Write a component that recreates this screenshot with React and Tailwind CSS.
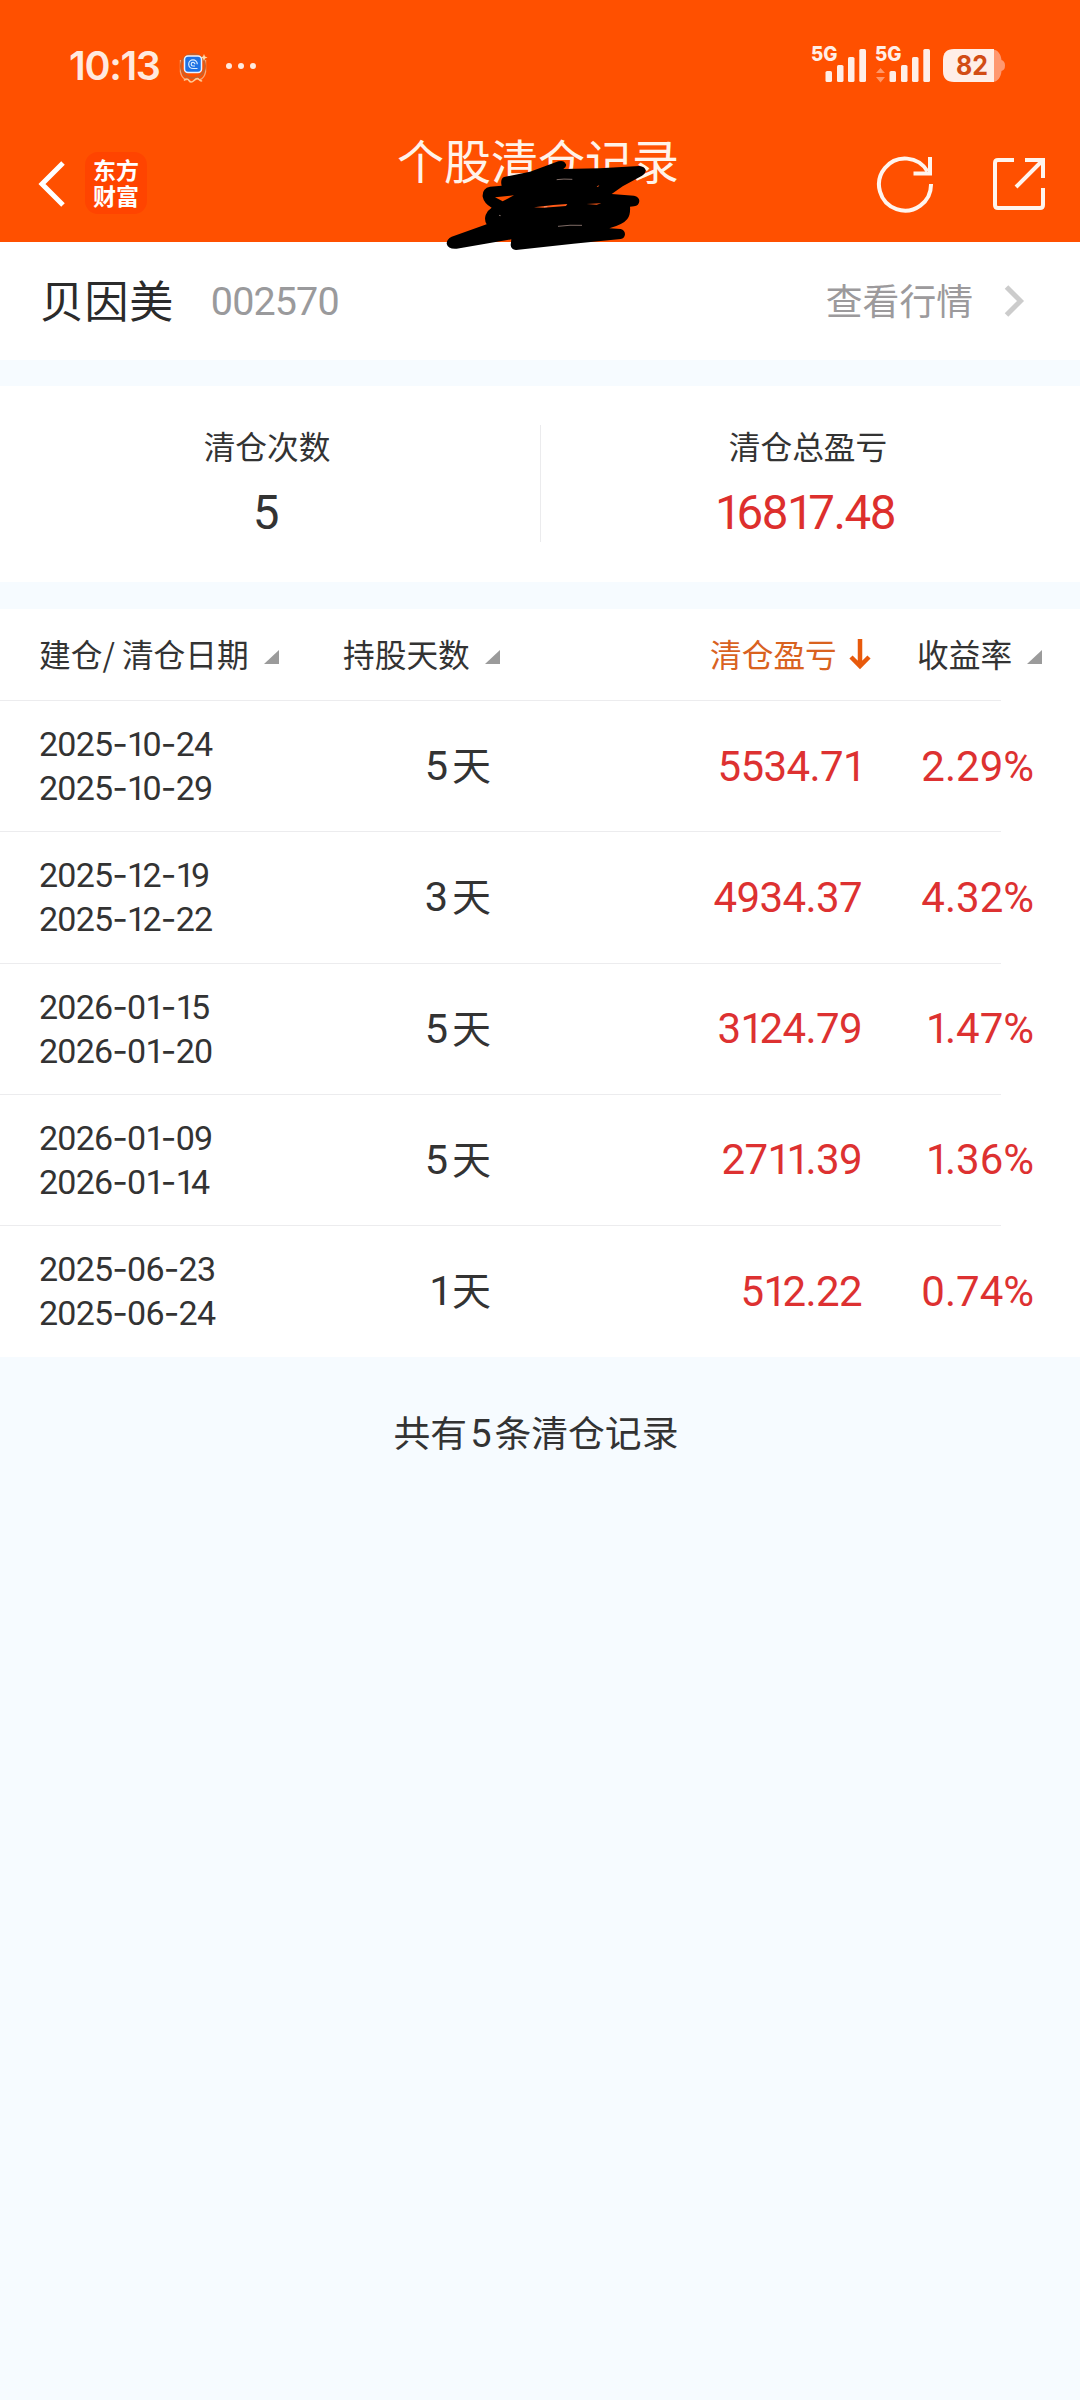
/* Numerals: a narrow 1 and wide hyphens, the rest from Roboto */
function Num({ children, className = "" }) {
  return (
    <span className={`font-[Roboto,sans-serif] whitespace-nowrap ${className}`}>
      {String(children).split("").map((c, i) =>
        c === "1" ? (
          <span key={i} className="tracking-[-0.11em]">1</span>
        ) : c === "-" ? (
          <span key={i} className="font-[Inter,sans-serif]">-</span>
        ) : (
          c
        )
      )}
    </span>
  );
}

function Signal({ data }) {
  return (
    <svg width="58" height="50" viewBox="808 35 58 50" fill="#ffeee7" className="overflow-visible">
      {data && <path d="M812 73l4.500-5 4.500 5zM812 77l4.500 5.500 4.500-5.500z" opacity="0.45" />}
      <rect x="825.500" y="71" width="6.500" height="11" rx="1.600" />
      <rect x="837" y="65" width="6.500" height="17" rx="1.600" />
      <rect x="848" y="57" width="6.500" height="25" rx="1.600" />
      <rect x="859.300" y="49" width="6.700" height="33" rx="1.600" />
      <text x="811" y="61" fontSize="20.500" fontWeight="800" fontFamily="Inter" textLength="26.500" lengthAdjust="spacingAndGlyphs">5G</text>
    </svg>
  );
}

function StatusBar() {
  return (
    <div className="flex h-[122px] items-start pt-[35px] pl-[69px] pr-[74px]">
      <div className="mt-[10px] h-[40px] w-[108px] font-[Inter,sans-serif] text-[39.500px] leading-[42px] font-semibold tracking-[-1.300px] whitespace-nowrap text-[#ffe9df]">10:13</div>
      <svg className="mt-[17px]" width="32" height="32" viewBox="0 0 32 32">
        <path d="M3.500 8v12q1 6 6 8M28.500 8v12q-1 6-6 8" fill="none" stroke="#f7a878" strokeWidth="1.400" />
        <circle cx="16" cy="14" r="12" fill="none" stroke="#c9602a" strokeWidth="2" />
        <path d="M7 28.500q3-3 5 0t5 0 5-1 3 1" fill="none" stroke="#ffc994" strokeWidth="1.600" />
        <path d="M27 2l1 2.500 2.500 1-2.500 1-1 2.500-1-2.500-2.500-1 2.500-1z" fill="#ffd9a8" />
        <rect x="7.500" y="4" width="17" height="16.500" rx="3.500" fill="#1f72e4" stroke="#e9f2ff" strokeWidth="1.500" />
        <path d="M20.500 16.500h-4.500a4.300 4.300 0 1 1 4.300-4.300M18 14h-2a1.800 1.800 0 1 1 1.800-1.800" fill="none" stroke="#d8ecff" strokeWidth="1.200" />
      </svg>
      <div className="mt-[28px] ml-[17px] flex gap-[6px]">
        <i className="size-[6px] rounded-full bg-[#ffe9df]" />
        <i className="size-[6px] rounded-full bg-[#ffe9df]" />
        <i className="size-[6px] rounded-full bg-[#ffe9df]" />
      </div>
      <div className="ml-auto flex">
        <Signal />
        <span className="w-[6px]" />
        <Signal data />
        <svg className="mt-[10px] ml-[12px]" width="64" height="40" viewBox="942 45 64 40">
          <path d="M994 49.500h-2c6 0 9 5 9.500 10.500q3.500 1 3.500 5.500t-3.500 5.500c-.5 6-3.500 11-9.500 11h2z" fill="#ff9870" />
          <path d="M954 49h40v33h-40q-11 0-11-11v-11q0-11 11-11z" fill="#ffeee7" />
          <text x="956" y="75.300" fontSize="26.500" fontWeight="700" fontFamily="Inter" fill="#d24c14" textLength="32" lengthAdjust="spacingAndGlyphs">82</text>
        </svg>
      </div>
    </div>
  );
}

/* Marker scrawl over the subtitle */
function Scribble() {
  return (
    <svg className="absolute top-[155px] left-[440px]" width="210" height="100" viewBox="0 0 630 300">
      <path
        d="M192 66L270 50L355 19Q372 14 378 28Q380 36 370 42L480 40L598 33Q614 34 617 46Q617 56 606 62L548 94L515 117L582 122Q598 126 598 138Q597 152 582 154L570 155Q572 180 562 192Q550 208 508 220L542 222Q555 226 555 238Q554 250 542 252L400 266L228 285Q213 283 212 270L214 253L50 281Q24 283 20 266Q20 252 35 245L140 208Q132 195 137 180Q142 166 155 158Q132 145 128 125Q126 100 150 95L185 92Q180 72 192 66Z"
        fill="#000"
      />
      <path d="M165 127L222 121L188 139Z" fill="#ff5000" />
      <path d="M282 157L340 150L382 147L378 153L310 158ZM440 147L484 145L470 149ZM470 94l8-3-4 5z" fill="#ff5a18" />
      <path d="M350 74Q370 71 397 73M354 214Q390 209 426 211M312 156l10-1M177 181l5 1" fill="none" stroke="#ffd9cc" strokeWidth="1.500" />
    </svg>
  );
}

function Header() {
  return (
    <header className="relative h-[242px] bg-[#ff5000]">
      <StatusBar />
      <div className="flex h-[120px] items-start">
        <svg className="mt-[38px] ml-[37px]" width="30" height="48" viewBox="37 160 30 48" fill="none" stroke="#fff" strokeWidth="5">
          <path d="M63 163L42 184L63 205" />
        </svg>
        <div className="mt-[30px] ml-[18px] flex h-[62px] w-[62px] flex-col items-center rounded-[13px] bg-[#ff4400] pt-[4px] text-[23px] leading-[26px] font-bold text-white">
          <span>东方</span>
          <span>财富</span>
        </div>
        <h1 className="mt-[7px] ml-[250px] text-[47px] leading-[60px] whitespace-nowrap text-[#fff3ea]">个股清仓记录</h1>
        <svg className="mt-[32px] ml-[196px]" width="60" height="60" viewBox="875 154 60 60" fill="none" stroke="#fff5ee" strokeWidth="4">
          <path d="M931 184A26 26 0 1 1 927.500 171.500" />
          <path d="M930 157v16.500h-16.500" />
        </svg>
        <svg className="mt-[32px] ml-[55px]" width="60" height="60" viewBox="990 154 60 60" fill="none" stroke="#fff5ee" strokeWidth="4">
          <path d="M1014 160h-16q-3 0-3 3v42q0 3 3 3h42q3 0 3-3v-17" />
          <path d="M1025 160h18v18M1043 160L1016 187" />
        </svg>
      </div>
      <Scribble />
    </header>
  );
}

const Tri = () => (
  <svg width="15" height="14" viewBox="0 0 15 14" className="mt-[8px]"><path d="M15 0v14H0z" fill="#9b9b9b" /></svg>
);

const records = [
  ["2025-10-24", "2025-10-29", "5", "5534.71", "2.29%"],
  ["2025-12-19", "2025-12-22", "3", "4934.37", "4.32%"],
  ["2026-01-15", "2026-01-20", "5", "3124.79", "1.47%"],
  ["2026-01-09", "2026-01-14", "5", "2711.39", "1.36%"],
  ["2025-06-23", "2025-06-24", "1", "512.22", "0.74%"],
];

function Record({ r, last }) {
  return (
    <div className="h-[131.25px]">
      <div className="flex h-[130.25px] items-center text-[#333]">
        <div className="ml-[39px] flex w-[230px] flex-col text-[34px] leading-[44px] tracking-[-0.800px]">
          <Num>{r[0]}</Num>
          <Num>{r[1]}</Num>
        </div>
        <div className="flex w-[222px] items-baseline justify-end gap-[4px]">
          <Num className="text-[41.500px]">{r[2]}</Num>
          <span className="text-[39px] leading-[56px]">天</span>
        </div>
        <Num className="w-[371px] text-right text-[42px] tracking-[-0.600px] text-[#dd3131]">{r[3]}</Num>
        <Num className="w-[172px] text-right text-[42px] text-[#dd3131]">{r[4]}</Num>
      </div>
      {!last && <div className="h-px w-[1001px] bg-[#ececee]" />}
    </div>
  );
}

export default function App() {
  return (
    <div className="min-h-[2400px] w-[1080px] bg-[#f6fbff] font-['Noto_Sans_CJK_SC',sans-serif] text-[#333]">
      <Header />
      <section className="flex h-[118px] items-center bg-white pl-[40px]">
        <span className="-mt-[4px] text-[44px] leading-[60px] tracking-[0.600px] whitespace-nowrap text-[#2b2b2b]">贝因美</span>
        <Num className="mt-[2px] ml-[37px] text-[39.500px] tracking-[-0.900px] text-[#9a9a9c]">002570</Num>
        <span className="-mt-[4px] ml-auto text-[36.800px] leading-[60px] whitespace-nowrap text-[#9c9a9c]">查看行情</span>
        <svg className="mr-[55px] ml-[30px]" width="22" height="32" viewBox="0 0 22 32" fill="none" stroke="#cccccc" strokeWidth="5">
          <path d="M3.500 2L17.500 16L3.500 30" />
        </svg>
      </section>
      <section className="mt-[26px] flex h-[196px] bg-white pt-[37px]">
        <div className="flex w-[534px] flex-col items-center">
          <span className="text-[31.700px] leading-[44px]">清仓次数</span>
          <Num className="mt-[18px] mr-[2px] text-[47.500px] leading-[56px] text-[#333]">5</Num>
        </div>
        <div className="mt-[2px] ml-[6px] h-[117px] w-px bg-[#ebebed]" />
        <div className="flex w-[534px] flex-col items-center">
          <span className="text-[31.700px] leading-[44px]">清仓总盈亏</span>
          <Num className="mt-[18px] mr-[6px] text-[47.500px] leading-[56px] tracking-[-1.500px] text-[#dd2f2d]">16817.48</Num>
        </div>
      </section>
      <section className="mt-[27px] bg-white">
        <div className="flex h-[91px] items-center pb-[4px] text-[31.700px] leading-[44px] whitespace-nowrap">
          <div className="ml-[39px] flex w-[304px] items-center gap-[15px]">
            <span>建仓/ 清仓日期</span><Tri />
          </div>
          <div className="flex w-[367px] items-center gap-[15px]">
            <span>持股天数</span><Tri />
          </div>
          <div className="flex w-[207px] items-center gap-[12px] text-[#d9621f]">
            <span>清仓盈亏</span>
            <svg className="mt-[2px]" width="22" height="32" viewBox="0 0 22 32" fill="none" stroke="#e85a0c" strokeWidth="4.500">
              <path d="M11 1v27M2 19l9 9 9-9" />
            </svg>
          </div>
          <div className="flex items-center gap-[15px]">
            <span>收益率</span><Tri />
          </div>
        </div>
        <div className="h-px w-[1001px] bg-[#ececee]" />
        {records.map((r, i) => (
          <Record key={i} r={r} last={i === records.length - 1} />
        ))}
      </section>
      <footer className="mt-[46px] flex items-baseline justify-center pr-[8px] text-[36.800px] leading-[56px]">
        <span>共有</span>
        <Num className="mx-[3px] text-[38px]">5</Num>
        <span>条清仓记录</span>
      </footer>
    </div>
  );
}
